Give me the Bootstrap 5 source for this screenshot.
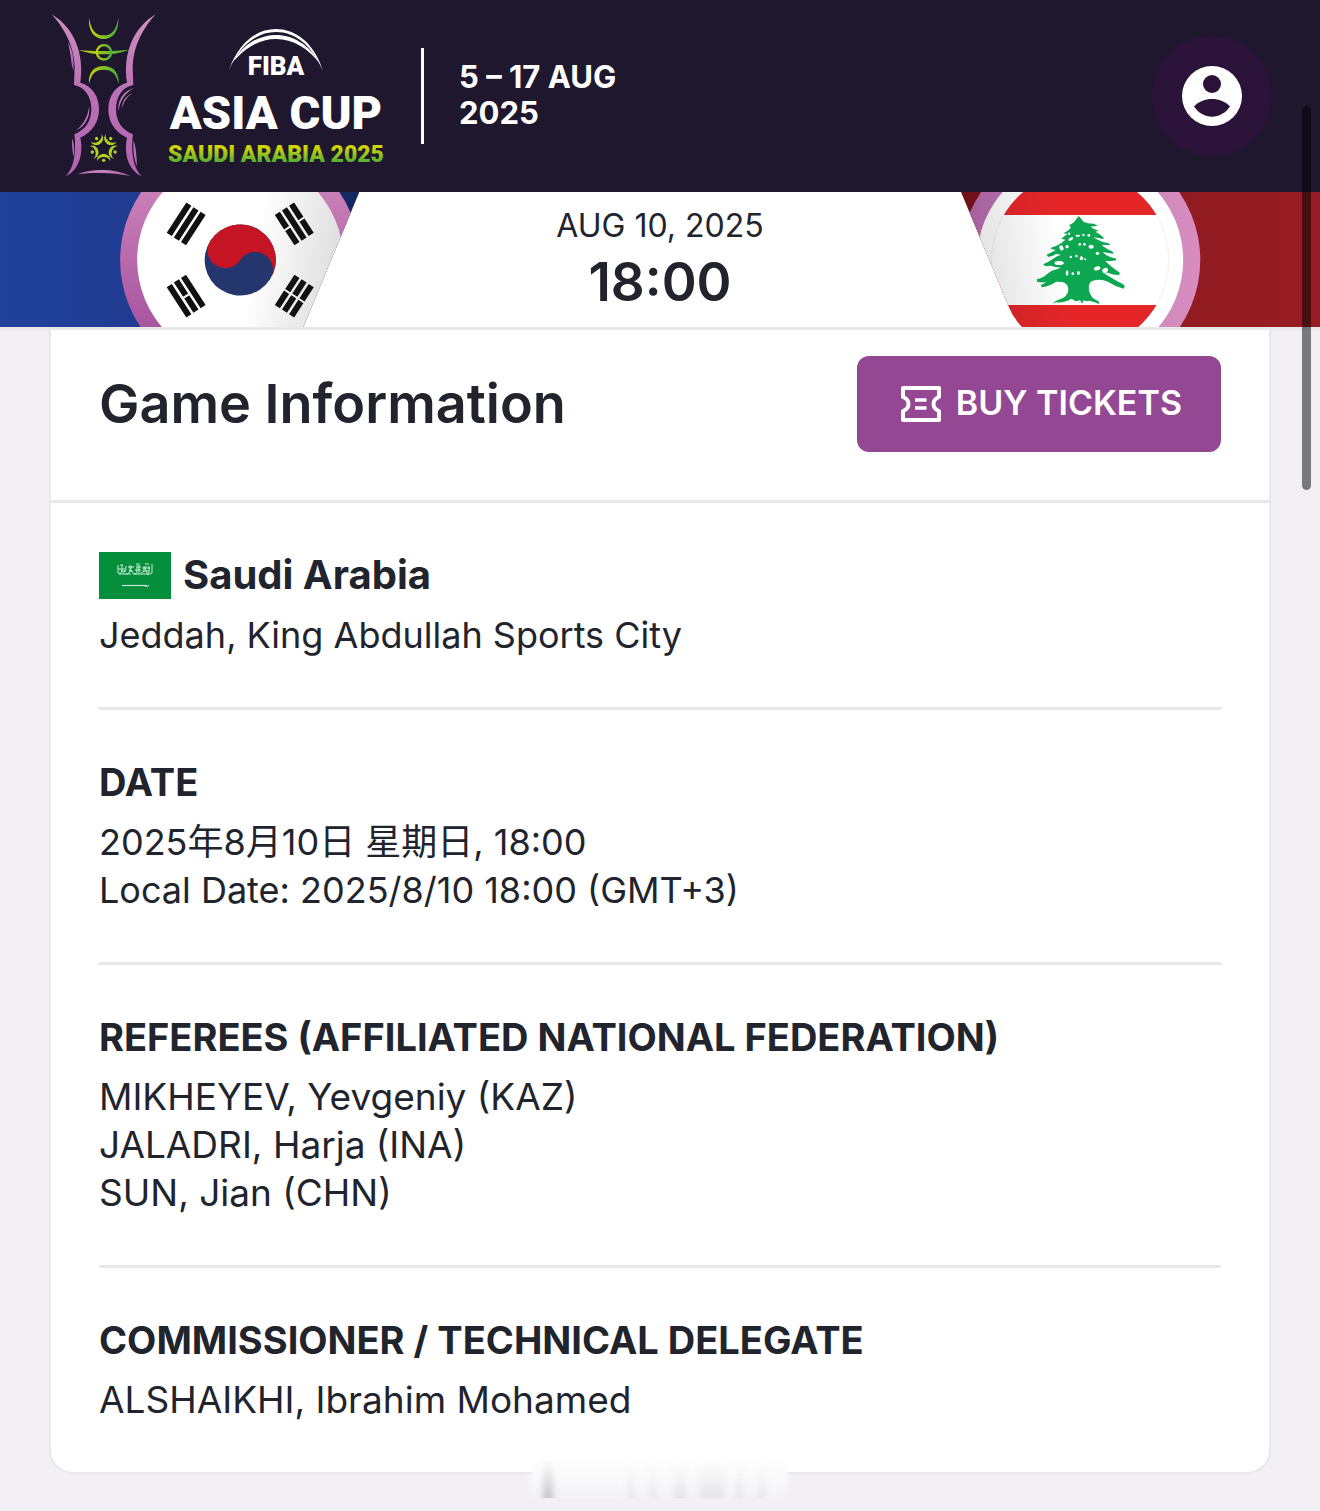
<!DOCTYPE html>
<html lang="en">
<head>
<meta charset="utf-8">
<meta name="viewport" content="width=device-width, initial-scale=1">
<title>FIBA Asia Cup 2025 – Game Information</title>
<link href="https://cdn.jsdelivr.net/npm/bootstrap@5.3.0/dist/css/bootstrap.min.css" rel="stylesheet">
<style>
body{background:#f2f0f4;color:#21242d;font-family:Inter,"Noto Sans CJK SC",sans-serif;overflow-x:hidden}
.site-head{background:#1f172e;height:192px;padding:0 48px}
.brand-art{width:336px;height:168px}
.brand-art text{font-family:Roboto,"Liberation Sans",sans-serif;font-weight:900;text-anchor:middle}
.event-dates{border-left:3px solid #fff;height:96px;margin-left:37px;padding:0 0 3px 35px;font-size:31px;line-height:36px;font-weight:700;color:#fff}
.profile-btn{width:120px;height:120px;background:#2a1238;border:0}
.match-strip{height:138px;background:#fff;border-bottom:3px solid #e9e9ea}
.team-side{width:27.3%;height:135px}
.match-mid{padding-top:16px}
.match-date{font-size:32px;line-height:36px;margin-bottom:8px}
.match-time{font-size:53px;line-height:60px;font-weight:600}
.info-card{margin:0 49px 37px;border:2px solid #e8e8eb;border-top:0;border-radius:0 0 24px 24px;background:#fff}
.info-head{padding:26px 48px 48px;border-bottom:3px solid #e8e8eb}
.info-title{font-size:54px;line-height:60px;font-weight:600}
.ticket-btn{background:#944893;color:#fff;height:96px;border-radius:12px;border:0;padding:0 39px 0 44px;gap:15px;font-size:34px;font-weight:600}
.ticket-btn span{padding-bottom:4px}
.info-list{padding:0 48px}
.info-item{padding:48px 0;font-size:36px;line-height:48px}
.info-item + .info-item{border-top:3px solid #e8e8eb}
.people-item{font-size:37px}
.info-label{font-size:38px;line-height:48px;font-weight:700;margin-bottom:12px}
.country-name{font-size:40px;gap:12px}
.scroll-thumb{right:9px;top:106px;width:9px;height:384px;border-radius:5px;background:rgba(0,0,0,.5)}
.tab-haze{left:50%;bottom:0;transform:translateX(-50%);width:270px;height:62px}
</style>
<script src="https://cdn.jsdelivr.net/npm/bootstrap@5.3.0/dist/js/bootstrap.bundle.min.js"></script>
</head>
<body class="position-relative">
<header class="site-head d-flex align-items-center">
<a href="#" aria-label="FIBA Asia Cup Saudi Arabia 2025">
<svg class="brand-art d-block" viewBox="48 12 336 168">
<defs>
<linearGradient id="gPink" x1="0" y1="0" x2="0" y2="1"><stop offset="0" stop-color="#cf8fbf"/><stop offset=".5" stop-color="#b96fb5"/><stop offset="1" stop-color="#b462ae"/></linearGradient>
<linearGradient id="gLime" x1="0" y1="0" x2="1" y2="0"><stop offset="0" stop-color="#c4d30b"/><stop offset="1" stop-color="#3fae3b"/></linearGradient>
<linearGradient id="gName" x1="0" y1="0" x2="0" y2="1"><stop offset=".25" stop-color="#d0d405"/><stop offset=".8" stop-color="#4fae35"/></linearGradient>
<g id="trophySide">
<path d="M35 28C70 66 102 120 104 185L102 240C137 246 154 278 154 312C154 348 137 374 103 388C108 425 107 488 76 514C121 494 130 440 121 398C159 380 177 350 177 312C177 275 157 242 121 233C134 145 102 68 35 28Z"/>
</g>
</defs>
<g transform="translate(40 5) scale(.3333)">
<g fill="url(#gPink)">
<use href="#trophySide"/>
<use href="#trophySide" transform="translate(382 0) scale(-1 1)"/>
<path d="M84 112C98 135 103 165 100 199C92 170 92 140 84 112Z"/>
<path d="M148 302C150 338 138 362 107 377C132 356 143 336 148 302Z"/>
<path d="M96 400C104 420 104 437 101 456C96 437 97 420 96 400Z"/>
<path d="M283 248C247 259 232 287 235 319C241 286 254 264 283 248Z"/>
<path d="M278 263C253 276 245 293 247 309C252 290 260 276 278 263Z"/>
<path d="M281 406C279 440 282 465 291 484C290 455 288 430 281 406Z"/>
<path d="M112 508C163 490 222 491 271 513C218 502 163 502 112 508Z"/>
</g>
<g fill="url(#gLime)">
<path d="M147 38C144 78 163 102 191 102C219 102 238 78 235 38C229 76 215 91 191 91C167 91 153 76 147 38Z"/>
<path d="M117 135C157 139 223 139 268 134C230 151 158 153 117 135Z"/>
<path fill-rule="evenodd" d="M192 117a25 25 0 1 0 .1 0ZM192 124a18 18 0 1 1-.1 0Z"/>
<path d="M147 237C144 202 163 183 191 183C219 183 238 202 236 237C228 205 215 194 191 194C167 194 154 205 147 237Z"/>
</g>
<g fill="#b5d321">
<g id="fig"><circle cx="191" cy="466" r="5"/><path d="M171 469C169 440 213 440 211 469C206 452 176 452 171 469Z"/></g>
<use href="#fig" transform="rotate(72 191 430)"/><use href="#fig" transform="rotate(144 191 430)"/><use href="#fig" transform="rotate(216 191 430)"/><use href="#fig" transform="rotate(288 191 430)"/>
</g>
</g>
<g fill="#fff">
<path d="M229 70C239 42 257 29 276 29C295 29 314 42 323 71C312 45 295 32 276 32C257 32 240 45 229 70Z"/>
<path d="M231 64C243 44 259 35 276 35C293 35 309 44 321 65C308 48 293 39 276 39C259 39 245 48 231 64Z"/>
<text x="276" y="75" font-size="26">FIBA</text>
<text x="276" y="129" font-size="47">ASIA CUP</text>
</g>
<text x="276" y="162" font-size="23" fill="url(#gName)">SAUDI ARABIA 2025</text>
</svg></a>
<div class="event-dates d-flex flex-column justify-content-center"><span>5 – 17 AUG</span><span>2025</span></div>
<button class="profile-btn rounded-circle ms-auto p-0 d-flex align-items-center justify-content-center" type="button" aria-label="Profile">
<svg width="60" height="60" viewBox="0 0 60 60"><circle cx="30" cy="30" r="30" fill="#fff"/><g fill="#2a1238"><circle cx="30" cy="18" r="9"/><path d="M12 40.500C21 30.500 39 30.500 48 40.500C39 54 21 54 12 40.500Z"/></g></svg>
</button>
</header>
<section class="match-strip d-flex justify-content-between">
<svg class="team-side" viewBox="0 192 360 135" preserveAspectRatio="xMaxYMid slice" role="img" aria-label="Korea">
<defs>
<linearGradient id="gBlue"><stop offset="0" stop-color="#21419a"/><stop offset=".6" stop-color="#1f3a8c"/><stop offset="1" stop-color="#14275f"/></linearGradient>
<linearGradient id="gRing" x1="0" y1="0" x2="0" y2="1"><stop offset="0" stop-color="#d68fc0"/><stop offset="1" stop-color="#9a4597"/></linearGradient>
<linearGradient id="gShadeR" gradientUnits="userSpaceOnUse" x1="255" y1="250" x2="345" y2="265"><stop offset="0" stop-color="#000" stop-opacity="0"/><stop offset="1" stop-color="#000" stop-opacity=".14"/></linearGradient>
<clipPath id="slantL"><path d="M0 192H359L303 327H0Z"/></clipPath>
</defs>
<g clip-path="url(#slantL)">
<path d="M0 192H360V327H0Z" fill="url(#gBlue)"/>
<circle cx="240" cy="260" r="120" fill="url(#gRing)"/>
<circle cx="240" cy="260" r="103" fill="#fff"/>
<circle cx="240" cy="260" r="103" fill="url(#gShadeR)"/>
<g transform="translate(240 260) rotate(33)"><circle r="35.500" fill="#25356d"/><path d="M-35.500 0A35.500 35.500 0 0 1 35.500 0A17.750 17.750 0 0 0 0 0A17.750 17.750 0 0 1 -35.500 0Z" fill="#c51424"/></g>
<g fill="#111">
<path transform="translate(186 224) rotate(33)" d="M-11.500-18h6v36h-6zM-3-18h6v36h-6zM5.500-18h6v36h-6z"/>
<path transform="translate(294 224) rotate(-33)" d="M-11.500-18h6v17h-6zM-11.500 1h6v17h-6zM-3-18h6v36h-6zM5.500-18h6v17h-6zM5.500 1h6v17h-6z"/>
<path transform="translate(186 296) rotate(-33)" d="M-11.500-18h6v36h-6zM-3-18h6v17h-6zM-3 1h6v17h-6zM5.500-18h6v36h-6z"/>
<path transform="translate(294 296) rotate(33)" d="M-11.500-18h6v17h-6zM-11.500 1h6v17h-6zM-3-18h6v17h-6zM-3 1h6v17h-6zM5.500-18h6v17h-6zM5.500 1h6v17h-6z"/>
</g>
</g>
</svg>
<div class="match-mid text-center"><div class="match-date">AUG 10, 2025</div><div class="match-time">18:00</div></div>
<svg class="team-side" viewBox="960 192 360 135" preserveAspectRatio="xMinYMid slice" role="img" aria-label="Lebanon">
<defs>
<linearGradient id="gRed"><stop offset="0" stop-color="#6e1017"/><stop offset=".4" stop-color="#8f1a21"/><stop offset="1" stop-color="#981c23"/></linearGradient>
<linearGradient id="gRing2"><stop offset="0" stop-color="#a05d9b"/><stop offset=".4" stop-color="#c27fb4"/><stop offset="1" stop-color="#d78dc0"/></linearGradient>
<linearGradient id="gShadeL" gradientUnits="userSpaceOnUse" x1="975" y1="265" x2="1062" y2="250"><stop offset="0" stop-color="#000" stop-opacity=".12"/><stop offset="1" stop-color="#000" stop-opacity="0"/></linearGradient>
<clipPath id="slantR"><path d="M961 192H1320V327H1022Q1012 316 1008 305Z"/></clipPath>
<clipPath id="flagDisc"><circle cx="1080" cy="260" r="88.500"/></clipPath>
</defs>
<g clip-path="url(#slantR)">
<path d="M960 192H1320V327H960Z" fill="url(#gRed)"/>
<circle cx="1080" cy="260" r="120" fill="url(#gRing2)"/>
<circle cx="1080" cy="260" r="103" fill="#fff"/>
<circle cx="1080" cy="260" r="88.500" fill="none" stroke="#e8e3e3" stroke-width=".6"/>
<path clip-path="url(#flagDisc)" d="M980 160H1180V215H980ZM980 305H1180V360H980Z" fill="#e52629"/>
<circle cx="1080" cy="260" r="103" fill="url(#gShadeL)"/>
<g transform="translate(1020 205) scale(.3333)">
<path fill="#0ca750" d="M176 33L191 51Q205 57 222 56L233 63Q221 64 211 65Q221 74 236 77L226 80Q237 86 249 96L251 102Q233 99 220 96Q237 110 263 114L272 119Q258 121 245 119Q253 129 276 139L281 146Q264 145 248 141Q261 157 287 160L288 166Q273 169 255 167Q268 182 299 203L297 210Q279 210 262 203L247 201Q271 218 309 238L314 244L310 251Q283 243 263 230Q240 219 216 228Q203 235 207 258Q212 279 230 286Q239 289 236 297L224 292L208 287L199 289L190 286L186 296L180 286L167 289L154 281Q132 294 108 292L97 296Q105 287 127 280Q148 268 144 247Q140 234 126 231L108 230Q91 243 65 247L62 241L80 230Q67 233 51 230L50 223Q68 220 84 205Q93 196 110 193L123 188Q104 187 91 182L76 184L69 178Q86 171 98 162Q112 152 123 149L107 146Q98 156 84 155L79 149Q97 142 107 135Q94 134 90 129Q106 125 114 120Q129 111 136 104L123 101Q132 95 142 87L130 85Q142 79 149 72L152 66L147 60Q162 54 167 44Z"/>
<g fill="#fff"><ellipse cx="152" cy="102" rx="8" ry="4" transform="rotate(-30 152 102)"/><ellipse cx="173" cy="92" rx="7" ry="3"/><circle cx="190" cy="90" r="3.500"/><circle cx="206" cy="91" r="4"/><circle cx="147" cy="86" r="3.500"/><ellipse cx="124" cy="129" rx="6" ry="8" transform="rotate(-30 124 129)"/><circle cx="141" cy="125" r="5"/><circle cx="179" cy="118" r="4"/><circle cx="193" cy="118" r="4"/><ellipse cx="213" cy="125" rx="8" ry="6"/><circle cx="232" cy="145" r="5"/><circle cx="152" cy="156" r="3.500"/><circle cx="169" cy="153" r="3.500"/><ellipse cx="184" cy="160" rx="5" ry="6"/><circle cx="195" cy="163" r="3"/><ellipse cx="117" cy="174" rx="14" ry="6"/><ellipse cx="231" cy="190" rx="10" ry="6" transform="rotate(-15 231 190)"/><ellipse cx="255" cy="196" rx="9" ry="7" transform="rotate(-25 255 196)"/><ellipse cx="141" cy="204" rx="4" ry="8"/><circle cx="158" cy="206" r="4"/><ellipse cx="175" cy="204" rx="4" ry="6"/></g>
</g>
</g>
</svg>
</section>
<main class="info-card">
<div class="info-head d-flex justify-content-between align-items-center">
<h1 class="info-title m-0">Game Information</h1>
<button type="button" class="ticket-btn d-flex align-items-center text-nowrap">
<svg width="40" height="36" viewBox="0 0 40 36" fill="none" stroke="#fff" stroke-width="4" stroke-linejoin="round"><path d="M2 2H38V11C34 12.500 32.500 15 32.500 18S34 23.500 38 25V34H2V25C6 23.500 7.500 21 7.500 18S6 12.500 2 11Z"/><path d="M14 14H25.500M14 22H25.500" stroke-width="3.500"/></svg>
<span>BUY TICKETS</span></button>
</div>
<div class="info-list">
<section class="info-item"><h2 class="info-label country-name d-flex align-items-center">
<svg width="72" height="47" viewBox="0 0 72 47" role="img" aria-label="Saudi flag"><path d="M0 0H72V47H0Z" fill="#058e3b"/><g fill="none" stroke="#c9ecd4" stroke-width="1"><path d="M19 13v8q3 2 4-2v-6M24 21q3-1 3-7M27 22q4 0 4-5v-4M33 14q-3 4 1 7t4-3v-5M40 13v9M42 21q4-1 3-7M47 14q-2 4 1 7t2-7M53 12v9q-2 2-5 1M19 17h7M29 15h6M36 18h6M43 16h8M20 22h12M34 22h16M21 13h3M37 12h4M46 12h4M22 19h5M30 19h4M38 15h4M44 19h6"/><path d="M23 33.500H48" stroke-width="1.200"/><path d="M45 33.500q3 2 5 0" stroke-width="1"/></g></svg>
<span>Saudi Arabia</span></h2>
<div>Jeddah, King Abdullah Sports City</div></section>
<section class="info-item"><h2 class="info-label">DATE</h2><div>2025年8月10日 星期日, 18:00</div><div>Local Date: 2025/8/10 18:00 (GMT+3)</div></section>
<section class="info-item people-item"><h2 class="info-label">REFEREES (AFFILIATED NATIONAL FEDERATION)</h2><div>MIKHEYEV, Yevgeniy (KAZ)</div><div>JALADRI, Harja (INA)</div><div>SUN, Jian (CHN)</div></section>
<section class="info-item people-item"><h2 class="info-label">COMMISSIONER / TECHNICAL DELEGATE</h2><div>ALSHAIKHI, Ibrahim Mohamed</div></section>
</div></main>
<svg class="tab-haze position-absolute" viewBox="525 1449 270 62" aria-hidden="true">
<defs><linearGradient id="gHaze" x1="0" y1="0" x2="0" y2="1"><stop offset="0" stop-color="#fff"/><stop offset=".5" stop-color="#fbfbfc"/><stop offset="1" stop-color="#f3f2f5"/></linearGradient>
<linearGradient id="gSmudge" x1="0" y1="0" x2="0" y2="1"><stop offset="0" stop-color="#999" stop-opacity="0"/><stop offset="1" stop-color="#888" stop-opacity=".45"/></linearGradient>
<filter id="soft" x="-50%" y="-20%" width="200%" height="140%"><feGaussianBlur stdDeviation="3 .5"/></filter></defs>
<path d="M532 1456H787V1498H532Z" fill="url(#gHaze)" filter="url(#soft)"/>
<g fill="url(#gSmudge)" filter="url(#soft)"><path d="M543 1458h10v40h-10z"/><path opacity=".3" d="M628 1460h6v38h-6zM650 1460h6v38h-6zM674 1460h12v38h-12zM699 1460h26v38h-26zM736 1460h7v38h-7zM758 1460h7v38h-7z"/></g>
</svg>
<div class="scroll-thumb position-absolute"></div>
</body></html>
